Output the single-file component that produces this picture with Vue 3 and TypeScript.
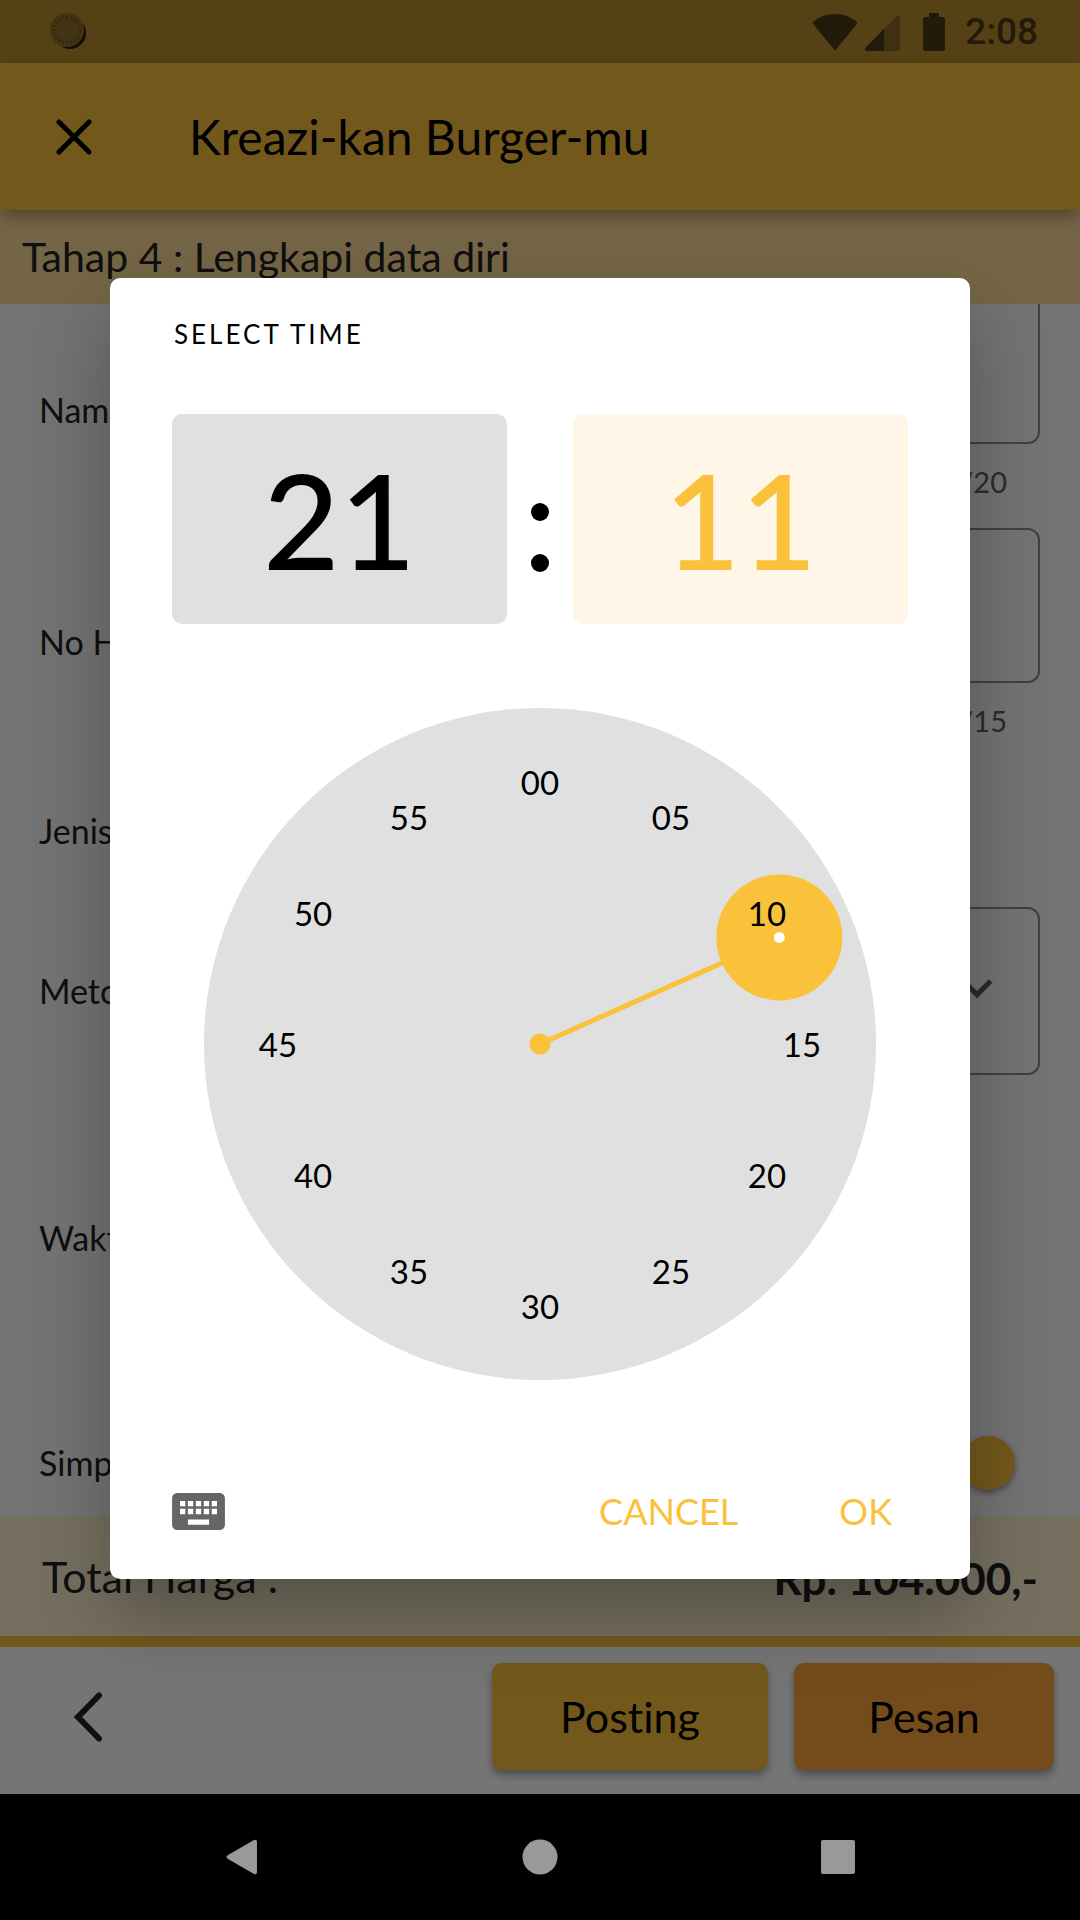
<script setup lang="ts">
import { ref } from 'vue'

interface Tick {
  label: string
  left: string
  top: string
}

const hour = ref('21')
const minute = ref('11')

/* Distance of the numerals and the selector from the centre, in dial units (dial radius = 336). */
const RING = 262

function polar(value: number): { x: number; y: number } {
  const angle = (value * 6 * Math.PI) / 180
  return { x: 336 + RING * Math.sin(angle), y: 336 - RING * Math.cos(angle) }
}

const ticks: Tick[] = Array.from({ length: 12 }, (_, i) => {
  const point = polar(i * 5)
  return {
    label: String(i * 5).padStart(2, '0'),
    left: `${(point.x / 672) * 100}%`,
    top: `${(point.y / 672) * 100}%`,
  }
})

const hand = polar(Number(minute.value))
const remember = ref(true)
const scallops = Array.from({ length: 20 }, (_, i) => i * 18)
</script>

<template>
  <div class="screen">
    <div class="app">
      <header class="status">
        <svg class="status-note" viewBox="0 0 40 40" width="40" height="40" aria-hidden="true">
          <circle cx="21" cy="21" r="16" fill="#2f240d" />
          <circle cx="18" cy="18" r="17" fill="#92712a" />
          <line
            v-for="a in scallops"
            :key="a"
            x1="18"
            y1="3"
            x2="18"
            y2="7"
            stroke="#785b20"
            stroke-width="2"
            :transform="`rotate(${a} 18 18)`"
          />
        </svg>
        <div class="status-icons">
          <svg viewBox="0 0 46 38" width="46" height="38" aria-hidden="true">
            <path d="M1.500 11.500 Q0 9.500 2 8 Q11 1 23 1 Q35 1 44 8 Q46 9.500 44.500 11.500 L24 36.500 Q23 37.500 22 36.500 Z" fill="#4c3b14" />
          </svg>
          <svg class="signal" viewBox="0 0 36 38" width="36" height="38" aria-hidden="true">
            <path d="M20 16 L33 3 Q36 1 36 4 V36 Q36 38 34 38 H20 Z" fill="#8a6a24" />
            <path d="M20 16 V38 H2 Q0 37 1 35 Z" fill="#4c3b14" />
          </svg>
          <svg class="battery" viewBox="0 0 22 38" width="22" height="38" aria-hidden="true">
            <path d="M6 0 H16 V4 H20 Q22 4 22 6 V36 Q22 38 20 38 H2 Q0 38 0 36 V6 Q0 4 2 4 H6 Z" fill="#4c3b14" />
          </svg>
          <span class="clock-text">2:08</span>
        </div>
      </header>

      <div class="appbar">
        <button type="button" class="icon-button close" aria-label="Tutup">
          <svg viewBox="0 0 36 36" width="36" height="36" aria-hidden="true">
            <path d="M3 3 L33 33 M33 3 L3 33" stroke="#000" stroke-width="5" stroke-linecap="round" fill="none" />
          </svg>
        </button>
        <h1 class="title">Kreazi-kan Burger-mu</h1>
      </div>

      <div class="step">Tahap 4 : Lengkapi data diri</div>

      <form class="form" @submit.prevent>
        <div class="row row-name">
          <label class="label" for="name">Nama</label>
          <div class="control">
            <input id="name" class="field field-cut" type="text" />
            <span class="counter">/20</span>
          </div>
        </div>
        <div class="row row-phone">
          <label class="label" for="phone">No HP</label>
          <div class="control">
            <input id="phone" class="field" type="tel" />
            <span class="counter">/15</span>
          </div>
        </div>
        <div class="row row-kind">
          <span class="label">Jenis</span>
        </div>
        <div class="row row-method">
          <label class="label" for="method">Metode</label>
          <div class="control select-box">
            <select id="method" class="field select"></select>
            <svg class="chevron" viewBox="0 0 24 24" width="62" height="62" aria-hidden="true">
              <path d="M16.590 8.590L12 13.170 7.410 8.590 6 10l6 6 6-6z" fill="#5c5c5c" />
            </svg>
          </div>
        </div>
        <div class="row row-time">
          <span class="label">Waktu</span>
        </div>
        <div class="row row-save">
          <label class="label" for="save">Simpan</label>
          <input id="save" v-model="remember" class="switch" type="checkbox" />
        </div>
      </form>

      <div class="total">
        <span>Total Harga :</span>
        <strong class="price">Rp. 104.000,-</strong>
      </div>

      <footer class="footer">
        <button type="button" class="icon-button back" aria-label="Kembali">
          <svg viewBox="0 0 30 50" width="30" height="50" aria-hidden="true">
            <path d="M26 3.500 L5 25 L26 46.500" stroke="#222" stroke-width="6" stroke-linecap="round" fill="none" />
          </svg>
        </button>
        <button type="button" class="action action-post">Posting</button>
        <button type="button" class="action action-order">Pesan</button>
      </footer>

      <div class="scrim">
        <section class="dialog" role="dialog" aria-labelledby="picker-title">
          <h2 id="picker-title" class="dialog-title">SELECT TIME</h2>
          <div class="digits">
            <button type="button" class="digit-box">{{ hour }}</button>
            <span class="colon"><i></i><i></i></span>
            <button type="button" class="digit-box digit-box-on">{{ minute }}</button>
          </div>

          <div class="dial">
            <svg class="dial-face" viewBox="0 0 672 672" aria-hidden="true">
              <circle cx="336" cy="336" r="336" fill="#e0e0e0" />
              <line x1="336" y1="336" :x2="hand.x" :y2="hand.y" stroke="#fac13b" stroke-width="5" />
              <circle cx="336" cy="336" r="10.500" fill="#fac13b" />
              <circle :cx="hand.x" :cy="hand.y" r="63" fill="#fac13b" />
              <circle :cx="hand.x" :cy="hand.y" r="5.500" fill="#fff" />
            </svg>
            <button
              v-for="tick in ticks"
              :key="tick.label"
              type="button"
              class="tick"
              :style="{ left: tick.left, top: tick.top }"
            >
              {{ tick.label }}
            </button>
          </div>

          <div class="dialog-actions">
            <button type="button" class="icon-button keyboard" aria-label="Keyboard">
              <svg viewBox="2 5 20 14" width="53" height="37" aria-hidden="true">
                <path
                  d="M20 5H4c-1.100 0-1.990.9-1.990 2L2 17c0 1.100.9 2 2 2h16c1.100 0 2-.9 2-2V7c0-1.100-.9-2-2-2zm-9 3h2v2h-2V8zm0 3h2v2h-2v-2zM8 8h2v2H8V8zm0 3h2v2H8v-2zm-1 2H5v-2h2v2zm0-3H5V8h2v2zm9 7H8v-2h8v2zm0-4h-2v-2h2v2zm0-3h-2V8h2v2zm3 3h-2v-2h2v2zm0-3h-2V8h2v2z"
                  fill="#666"
                />
              </svg>
            </button>
            <button type="button" class="text-button">CANCEL</button>
            <button type="button" class="text-button">OK</button>
          </div>
        </section>
      </div>
    </div>

    <nav class="navbar" aria-label="System">
      <button type="button" class="icon-button" aria-label="Back">
        <svg viewBox="0 0 36 36" width="36" height="36" aria-hidden="true">
          <path d="M4 16 L30 1 Q33 0 33 3 V33 Q33 36 30 35 L4 20 Q1 18 4 16 Z" fill="#999" />
        </svg>
      </button>
      <button type="button" class="icon-button" aria-label="Home">
        <svg viewBox="0 0 36 36" width="36" height="36" aria-hidden="true">
          <circle cx="18" cy="18" r="17.500" fill="#999" />
        </svg>
      </button>
      <button type="button" class="icon-button" aria-label="Recents">
        <svg viewBox="0 0 36 36" width="36" height="36" aria-hidden="true">
          <rect x="1" y="1" width="34" height="34" rx="2" fill="#999" />
        </svg>
      </button>
    </nav>
  </div>
</template>

<style>
body {
  background: #000;
}
</style>

<style scoped>
.screen {
  display: flex;
  flex-direction: column;
  min-height: 100vh;
  font-family: "Gill Sans", Lato, "Noto Sans", sans-serif;
  font-variant-ligatures: none;
  color: #000;
}

button,
input,
select {
  font: inherit;
  font-variant-ligatures: none;
  color: inherit;
}

button {
  padding: 0;
  border: 0;
  background: none;
}

svg {
  display: block;
}

.app {
  position: relative;
  display: flex;
  flex: 1;
  flex-direction: column;
  background: #fafafa;
}

.status {
  display: flex;
  align-items: center;
  justify-content: space-between;
  height: 63px;
  padding: 0 42px 0 49px;
  background: #bb8d2e;
}

.status-icons {
  display: flex;
  align-items: center;
}

.signal {
  margin-left: 6px;
}

.battery {
  margin-left: 23px;
}

.clock-text {
  margin-left: 20px;
  font: 500 37px/44px Roboto, sans-serif;
  color: #4c3b14;
}

.appbar {
  position: relative;
  display: flex;
  align-items: center;
  height: 147px;
  padding-left: 56px;
  background: #fac13b;
  box-shadow: 0 8px 16px -2px rgba(0, 0, 0, 0.34);
}

.title {
  margin: 0 0 0 97px;
  font-size: 48px;
  font-weight: 400;
  line-height: 58px;
}

.step {
  height: 94px;
  padding-left: 22px;
  background: #fcdc9a;
  font-size: 41px;
  line-height: 94px;
  color: #222;
}

.form {
  flex: 1;
  overflow: hidden;
}

.row {
  display: flex;
  align-items: center;
  padding: 0 40px 0 39px;
}

.row-name {
  min-height: 212px;
}

.row-phone {
  min-height: 252px;
}

.row-kind {
  min-height: 126px;
}

.row-method {
  min-height: 194px;
}

.row-time {
  min-height: 300px;
}

.row-save {
  min-height: 104px;
  padding-top: 23px;
}

.label {
  flex: 1;
  font-size: 34px;
  line-height: 40px;
  color: #222;
}

.control {
  display: flex;
  flex: 2;
  flex-direction: column;
  align-self: flex-start;
}

.row-phone .control {
  margin-top: 12px;
}

.field {
  box-sizing: border-box;
  width: 100%;
  height: 155px;
  margin: 0;
  border: 2px solid #8c8c8c;
  border-radius: 12px;
  background: transparent;
}

.field-cut {
  height: 140px;
  border-top: 0;
  border-radius: 0 0 12px 12px;
}

.counter {
  align-self: flex-end;
  margin: 18px 33px 0 0;
  font-size: 29px;
  line-height: 40px;
  color: #606060;
}

.select-box {
  position: relative;
  align-self: center;
}

.select {
  height: 168px;
  appearance: none;
}

.chevron {
  position: absolute;
  top: 50%;
  right: 32px;
  margin-top: -34px;
  pointer-events: none;
}

.switch {
  width: 54px;
  height: 54px;
  margin: 0 25px 0 0;
  appearance: none;
  border-radius: 50%;
  background: #fac13b;
  box-shadow: 0 3px 6px rgba(0, 0, 0, 0.4);
}

.total {
  display: flex;
  align-items: center;
  justify-content: space-between;
  height: 120px;
  padding: 0 42px;
  border-bottom: 11px solid #fac13b;
  background: #fff1d1;
  font-size: 43px;
  color: #222;
}

.price {
  padding-top: 4px;
  font-size: 44px;
  font-weight: 700;
}

.footer {
  box-sizing: border-box;
  display: flex;
  align-items: center;
  height: 147px;
  padding: 0 26px 8px 73px;
  background: #fff;
}

.footer .back {
  margin-right: auto;
}

.action {
  height: 107px;
  border-radius: 10px;
  box-shadow: 0 5px 8px rgba(0, 0, 0, 0.35);
  font-size: 43px;
}

.action-post {
  width: 276px;
  background: #fac13b;
}

.action-order {
  width: 260px;
  margin-left: 26px;
  background: #fca53b;
}

.scrim {
  position: absolute;
  inset: 0;
  display: flex;
  align-items: center;
  justify-content: center;
  padding-top: 63px;
  background: rgba(0, 0, 0, 0.54);
}

.dialog {
  box-sizing: border-box;
  width: calc(100% - 220px);
  padding: 0 62px;
  border-radius: 10px;
  background: #fff;
  box-shadow: 0 36px 72px rgba(0, 0, 0, 0.27);
}

.dialog-title {
  height: 88px;
  margin: 0;
  padding: 40px 0 8px 2px;
  box-sizing: content-box;
  font-size: 26px;
  font-weight: 400;
  line-height: 32px;
  letter-spacing: 3px;
}

.digits {
  display: flex;
}

.digit-box {
  flex: 1;
  height: 210px;
  border-radius: 10px;
  background: #e0e0e0;
  font-size: 132px;
  font-weight: 500;
  line-height: 160px;
}

.digit-box-on {
  background: #fff6e7;
  color: #fac13b;
}

.colon {
  display: flex;
  flex-direction: column;
  align-items: center;
  gap: 33px;
  width: 66px;
  padding-top: 89px;
  box-sizing: border-box;
}

.colon i {
  width: 18px;
  height: 18px;
  border-radius: 50%;
  background: #000;
}

.dial {
  position: relative;
  max-width: 672px;
  margin: 84px auto 64px;
  aspect-ratio: 1;
}

.dial-face {
  width: 100%;
  height: 100%;
}

.tick {
  position: absolute;
  transform: translate(-50%, -50%);
  font-size: 33px;
  line-height: 40px;
}

.dialog-actions {
  display: flex;
  align-items: center;
  height: 135px;
  padding-right: 16px;
}

.keyboard {
  margin-right: auto;
}

.text-button {
  margin-left: 101px;
  padding-bottom: 2px;
  font-size: 36px;
  line-height: 40px;
  color: #fac13b;
}

.navbar {
  display: flex;
  align-items: center;
  justify-content: space-between;
  height: 126px;
  padding: 0 224px;
  background: #000;
}
</style>
